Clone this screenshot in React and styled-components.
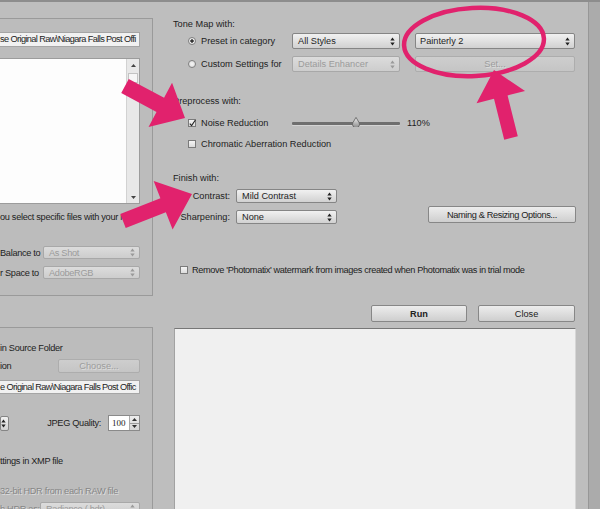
import React from "react";
import styled, { createGlobalStyle } from "styled-components";

const PINK = "#e1226d";

const GlobalStyle = createGlobalStyle`
  html, body {
    margin: 0;
    padding: 0;
    background: #bebebe;
  }
`;

const Window = styled.div`
  position: relative;
  width: 600px;
  height: 509px;
  box-sizing: border-box;
  border-top: 2px solid #8d8d8d;
  background: #bebebe;
  display: flex;
  overflow: hidden;
  font-family: "Liberation Sans", Arial, sans-serif;
  font-size: 9.2px;
  color: #222;
`;

const Main = styled.div`
  flex: 1;
  display: grid;
  grid-template-columns: 153px 1fr;
  min-width: 0;
`;

const SideStrip = styled.div`
  width: 11px;
  border-left: 1px solid #979797;
  background: #ababab;
`;

/* left column */

const LeftCol = styled.div`
  padding-top: 16px;
  display: flex;
  flex-direction: column;
  min-width: 0;
  letter-spacing: -0.3px;
`;

const Panel = styled.div`
  box-sizing: border-box;
  flex-shrink: 0;
  height: ${(p) => p.$h}px;
  margin-top: ${(p) => p.$mt || 0}px;
  padding-right: 12px;
  border: 1px solid #9a9a9a;
  border-left: none;
  background: #bcbcbc;
  display: flex;
  flex-direction: column;
  overflow: hidden;
`;

const TextInput = styled.div`
  box-sizing: border-box;
  flex-shrink: 0;
  height: ${(p) => p.$h}px;
  margin-top: ${(p) => p.$mt}px;
  border: 1px solid #a5a5a5;
  border-left: none;
  background: #f1f1f1;
  line-height: ${(p) => p.$h - 2}px;
  letter-spacing: -0.6px;
  white-space: nowrap;
  overflow: hidden;
`;

const ListBox = styled.div`
  box-sizing: border-box;
  flex-shrink: 0;
  height: 146px;
  margin-top: 11px;
  border: 1px solid #9c9c9c;
  border-left: none;
  background: #fdfdfd;
  display: flex;
  justify-content: flex-end;
`;

const ScrollBar = styled.div`
  width: 12px;
  border-left: 1px solid #d2d2d2;
  background: #e8e8e8;
  display: flex;
  flex-direction: column;
  align-items: center;
`;

const ScrollArrow = styled.div`
  height: 12px;
  display: flex;
  align-items: center;
  justify-content: center;
  margin-top: ${(p) => (p.$bottom ? "auto" : "0")};
`;

const ScrollThumb = styled.div`
  box-sizing: border-box;
  width: 10px;
  height: 10px;
  margin-top: 2px;
  border: 1px solid #c3c3c3;
  background: #f6f6f6;
`;

const Line = styled.div`
  flex-shrink: 0;
  line-height: 12px;
  margin-top: ${(p) => p.$mt || 0}px;
  white-space: nowrap;
  color: ${(p) => (p.$disabled ? "#868686" : "#222")};
  text-shadow: ${(p) => (p.$disabled ? "1px 1px 0 #dcdcdc" : "none")};
`;

const FieldRow = styled.div`
  flex-shrink: 0;
  display: flex;
  align-items: center;
  justify-content: space-between;
  height: ${(p) => p.$h}px;
  margin-top: ${(p) => p.$mt}px;
  white-space: nowrap;
`;

const RowLabel = styled.span`
  color: ${(p) => (p.$disabled ? "#868686" : "#222")};
  text-shadow: ${(p) => (p.$disabled ? "1px 1px 0 #dcdcdc" : "none")};
`;

const QualityLabel = styled.span`
  margin-left: auto;
  margin-right: 7px;
`;

const Spinner = styled.div`
  box-sizing: border-box;
  width: 32px;
  height: 16px;
  border: 1px solid #8a8a8a;
  background: #fff;
  display: flex;
  align-items: stretch;
`;

const SpinValue = styled.span`
  flex: 1;
  padding-left: 3px;
  font-family: "Liberation Serif", "Times New Roman", serif;
  font-size: 9px;
  letter-spacing: 0;
  line-height: 14px;
`;

const SpinButtons = styled.div`
  width: 9px;
  border-left: 1px solid #a9a9a9;
  background: linear-gradient(#ededed, #d6d6d6);
  display: flex;
  flex-direction: column;
`;

const SpinHalf = styled.div`
  flex: 1;
  display: flex;
  align-items: center;
  justify-content: center;
  border-top: ${(p) => (p.$lower ? "1px solid #9c9c9c" : "none")};
`;

/* right column */

const RightCol = styled.div`
  padding: 0 12px 0 20px;
  display: flex;
  flex-direction: column;
  min-width: 0;
`;

const Heading = styled.div`
  line-height: 12px;
  margin-top: ${(p) => p.$mt}px;
  white-space: nowrap;
`;

const Row = styled.div`
  display: flex;
  align-items: center;
  flex-shrink: 0;
  height: ${(p) => p.$h}px;
  margin-top: ${(p) => p.$mt}px;
  padding-left: ${(p) => p.$indent || 0}px;
  justify-content: ${(p) => (p.$end ? "flex-end" : "flex-start")};
  gap: ${(p) => p.$gap || 0}px;
  white-space: nowrap;
`;

const Option = styled.label`
  display: flex;
  align-items: center;
  gap: ${(p) => p.$gap ?? 5}px;
  width: ${(p) => (p.$w ? `${p.$w}px` : "auto")};
  flex-shrink: 0;
  letter-spacing: ${(p) => (p.$tight ? "-0.36px" : "normal")};
`;

const RadioDot = styled.span`
  box-sizing: border-box;
  width: 8px;
  height: 8px;
  border-radius: 50%;
  border: 1px solid #808080;
  background: ${(p) =>
    p.$checked
      ? "radial-gradient(circle, #333 0 1.4px, #f3f3f3 2px, #d6d6d6 100%)"
      : "radial-gradient(circle, #f6f6f6 0, #d8d8d8 100%)"};
  flex-shrink: 0;
`;

const CheckSquare = styled.span`
  box-sizing: border-box;
  width: 8px;
  height: 8px;
  border: 1px solid #7b7b7b;
  background: linear-gradient(#f5f5f5, #dcdcdc);
  display: flex;
  align-items: center;
  justify-content: center;
  flex-shrink: 0;
`;

const SelectBox = styled.div`
  box-sizing: border-box;
  flex-shrink: 0;
  width: ${(p) => p.$w}px;
  height: ${(p) => p.$h}px;
  margin-left: ${(p) => p.$ml || 0}px;
  display: flex;
  align-items: center;
  justify-content: space-between;
  padding: 0 ${(p) => p.$pr ?? 4}px 0 ${(p) => p.$pl ?? 5}px;
  border: 1px solid ${(p) => (p.$disabled ? "#a8a8a8" : "#858585")};
  border-radius: 2px;
  background: ${(p) =>
    p.$disabled
      ? "linear-gradient(#dcdcdc, #cdcdcd)"
      : "linear-gradient(#f1f1f1, #d1d1d1)"};
  color: ${(p) => (p.$disabled ? "#9b9b9b" : "#1e1e1e")};
  white-space: nowrap;
  overflow: hidden;
`;

const Button = styled.div`
  box-sizing: border-box;
  flex-shrink: 0;
  width: ${(p) => p.$w}px;
  height: ${(p) => p.$h}px;
  margin-left: ${(p) => p.$ml || 0}px;
  display: flex;
  align-items: center;
  justify-content: center;
  border: 1px solid ${(p) => (p.$disabled ? "#adadad" : "#878787")};
  border-radius: 2px;
  background: ${(p) =>
    p.$disabled
      ? "linear-gradient(#cecece, #c5c5c5)"
      : "linear-gradient(#ededed, #cecece)"};
  color: ${(p) => (p.$disabled ? "#9c9c9c" : "#222")};
  text-shadow: ${(p) => (p.$disabled ? "1px 1px 0 #dedede" : "none")};
  font-weight: ${(p) => (p.$bold ? 700 : 400)};
  letter-spacing: ${(p) => (p.$tight ? "-0.36px" : "normal")};
  white-space: nowrap;
`;

const SliderTrack = styled.div`
  position: relative;
  flex-shrink: 0;
  width: 108px;
  height: 3px;
  border-radius: 1px;
  background: #6f6f6f;
  box-shadow: 0 1px 0 #d4d4d4;
`;

const SliderThumb = styled.svg`
  position: absolute;
  top: -5px;
  margin-left: -4px;
`;

const Percent = styled.span`
  margin-left: 7px;
`;

const FinishBlock = styled.div`
  display: flex;
  align-items: flex-end;
  margin-top: 5px;
  flex-shrink: 0;
`;

const FinishFields = styled.div`
  display: flex;
  flex-direction: column;
  gap: 7px;
`;

const FieldLabel = styled.span`
  width: 57px;
  margin-right: 6px;
  text-align: right;
`;

const OutputArea = styled.div`
  flex: 1;
  margin: 6px 0 0 1px;
  border-top: 1px solid #777;
  border-left: 1px solid #a2a2a2;
  border-right: 1px solid #d6d6d6;
  background: #f0f0f0;
`;

const Overlay = styled.svg`
  position: absolute;
  left: 0;
  top: -2px;
  pointer-events: none;
`;

/* small drawings */

const Arrows = ({ color }) => (
  <svg width="5" height="9" viewBox="0 0 5 9">
    <polygon points="0.3,3.6 2.5,0.4 4.7,3.6" fill={color} />
    <polygon points="0.3,5.4 2.5,8.6 4.7,5.4" fill={color} />
  </svg>
);

const Tri = ({ down, color = "#444", size = 5 }) => (
  <svg width={size} height={size - 2} viewBox="0 0 5 3">
    <polygon points={down ? "0,0 5,0 2.5,3" : "0,3 5,3 2.5,0"} fill={color} />
  </svg>
);

const Select = ({ w, h = 16, ml, pl, pr, disabled, children }) => (
  <SelectBox $w={w} $h={h} $ml={ml} $pl={pl} $pr={pr} $disabled={disabled}>
    <span>{children}</span>
    <Arrows color={disabled ? "#9a9a9a" : "#222"} />
  </SelectBox>
);

const Radio = ({ checked, label, w }) => (
  <Option $w={w}>
    <RadioDot $checked={checked} />
    <span>{label}</span>
  </Option>
);

const Checkbox = ({ checked, label, w, gap, tight }) => (
  <Option $w={w} $gap={gap} $tight={tight}>
    <CheckSquare>
      {checked && (
        <svg width="7" height="7" viewBox="0 0 7 7" style={{ overflow: "visible" }}>
          <polyline points="0.8,3.6 2.6,5.6 6.4,0" fill="none" stroke="#222" strokeWidth="1.1" />
        </svg>
      )}
    </CheckSquare>
    <span>{label}</span>
  </Option>
);

const Slider = ({ value, min, max }) => (
  <SliderTrack>
    <SliderThumb
      width="8"
      height="10"
      viewBox="0 0 8 10"
      style={{ left: `${((value - min) / (max - min)) * 100}%` }}
    >
      <defs>
        <linearGradient id="thumbFill" x1="0" y1="0" x2="0" y2="1">
          <stop offset="0" stopColor="#f0f0f0" />
          <stop offset="1" stopColor="#8a8a8a" />
        </linearGradient>
      </defs>
      <path
        d="M4 0.4 L7.1 5.6 A3.5 3.5 0 1 1 0.9 5.6 Z"
        fill="url(#thumbFill)"
        stroke="#5c5c5c"
        strokeWidth="0.8"
      />
    </SliderThumb>
  </SliderTrack>
);

const Arrow = ({ tail, tip, w, head, len }) => {
  const dx = tip[0] - tail[0];
  const dy = tip[1] - tail[1];
  const L = Math.hypot(dx, dy);
  const deg = (Math.atan2(dy, dx) * 180) / Math.PI;
  const pts = [
    [0, -w],
    [L - len, -w],
    [L - len, -head],
    [L, 0],
    [L - len, head],
    [L - len, w],
    [0, w],
  ]
    .map((p) => p.join(","))
    .join(" ");
  return (
    <polygon
      points={pts}
      transform={`translate(${tail[0]} ${tail[1]}) rotate(${deg})`}
      fill={PINK}
    />
  );
};

const Annotations = () => (
  <Overlay width="600" height="509" viewBox="0 0 600 509">
    <ellipse
      cx="474"
      cy="42"
      rx="70"
      ry="34"
      transform="rotate(-3 474 42)"
      fill="none"
      stroke={PINK}
      strokeWidth="4.5"
    />
    <Arrow tail={[125, 86]} tip={[185, 118]} w={8} head={25} len={28} />
    <Arrow tail={[123, 221]} tip={[192, 194]} w={7.5} head={26} len={31} />
    <Arrow tail={[511, 138]} tip={[494, 70]} w={7} head={25} len={28} />
  </Overlay>
);

const SourcePanel = () => (
  <Panel $h={278}>
    <TextInput $h={15} $mt={13}>se Original Raw\Niagara Falls Post Offi</TextInput>
    <ListBox>
      <ScrollBar>
        <ScrollArrow>
          <Tri />
        </ScrollArrow>
        <ScrollThumb />
        <ScrollArrow $bottom>
          <Tri down />
        </ScrollArrow>
      </ScrollBar>
    </ListBox>
    <Line $mt={7}>ou select specific files with your mouse</Line>
    <FieldRow $h={13} $mt={23}>
      <RowLabel>Balance to</RowLabel>
      <Select w={97} h={13} disabled>As Shot</Select>
    </FieldRow>
    <FieldRow $h={13} $mt={7}>
      <RowLabel>r Space to</RowLabel>
      <Select w={97} h={13} disabled>AdobeRGB</Select>
    </FieldRow>
  </Panel>
);

const OutputPanel = () => (
  <Panel $h={200} $mt={31}>
    <Line $mt={14}>in Source Folder</Line>
    <FieldRow $h={14} $mt={5}>
      <RowLabel>ion</RowLabel>
      <Button $w={82} $h={14} $disabled>Choose...</Button>
    </FieldRow>
    <TextInput $h={14} $mt={7}>e Original Raw\Niagara Falls Post Offic</TextInput>
    <FieldRow $h={18} $mt={20}>
      <Select w={9} h={15} pl={0} pr={2} />
      <QualityLabel>JPEG Quality:</QualityLabel>
      <Spinner>
        <SpinValue>100</SpinValue>
        <SpinButtons>
          <SpinHalf>
            <Tri size={5} color="#333" />
          </SpinHalf>
          <SpinHalf $lower>
            <Tri down size={5} color="#333" />
          </SpinHalf>
        </SpinButtons>
      </Spinner>
    </FieldRow>
    <Line $mt={23}>ttings in XMP file</Line>
    <Line $mt={18} $disabled>32-bit HDR from each RAW file</Line>
    <FieldRow $h={13} $mt={5}>
      <RowLabel $disabled>h HDR as:</RowLabel>
      <Select w={100} h={13} disabled>Radiance (.hdr)</Select>
    </FieldRow>
  </Panel>
);

const SettingsColumn = () => (
  <RightCol>
    <Heading $mt={16}>Tone Map with:</Heading>
    <Row $h={16} $mt={3} $indent={15}>
      <Radio checked label="Preset in category" w={104} />
      <Select w={108}>All Styles</Select>
      <Select w={160} ml={15} pl={4}>Painterly 2</Select>
    </Row>
    <Row $h={16} $mt={7} $indent={15}>
      <Radio label="Custom Settings for" w={104} />
      <Select w={108} disabled>Details Enhancer</Select>
      <Button $w={160} $h={16} $ml={15} $disabled>Set...</Button>
    </Row>

    <Heading $mt={23}>Preprocess with:</Heading>
    <Row $h={12} $mt={10} $indent={15}>
      <Checkbox checked label="Noise Reduction" w={104} />
      <Slider value={110} min={0} max={185} />
      <Percent>110%</Percent>
    </Row>
    <Row $h={12} $mt={9} $indent={15}>
      <Checkbox label="Chromatic Aberration Reduction" />
    </Row>

    <Heading $mt={22}>Finish with:</Heading>
    <FinishBlock>
      <FinishFields>
        <Row $h={14} $mt={0}>
          <FieldLabel>Contrast:</FieldLabel>
          <Select w={101} h={14}>Mild Contrast</Select>
        </Row>
        <Row $h={14} $mt={0}>
          <FieldLabel>Sharpening:</FieldLabel>
          <Select w={101} h={14}>None</Select>
        </Row>
      </FinishFields>
      <Button $w={148} $h={17} $tight style={{ marginLeft: "auto", marginBottom: 1 }}>
        Naming &amp; Resizing Options...
      </Button>
    </FinishBlock>

    <Row $h={12} $mt={40} $indent={7}>
      <Checkbox
        gap={4}
        tight
        label="Remove 'Photomatix' watermark from images created when Photomatix was in trial mode"
      />
    </Row>

    <Row $h={17} $mt={29} $end $gap={11}>
      <Button $w={96} $h={17} $bold>Run</Button>
      <Button $w={97} $h={17} style={{ marginRight: 1 }}>Close</Button>
    </Row>
    <OutputArea />
  </RightCol>
);

export default function App() {
  return (
    <>
      <GlobalStyle />
      <Window>
        <Main>
          <LeftCol>
            <SourcePanel />
            <OutputPanel />
          </LeftCol>
          <SettingsColumn />
        </Main>
        <SideStrip />
        <Annotations />
      </Window>
    </>
  );
}
